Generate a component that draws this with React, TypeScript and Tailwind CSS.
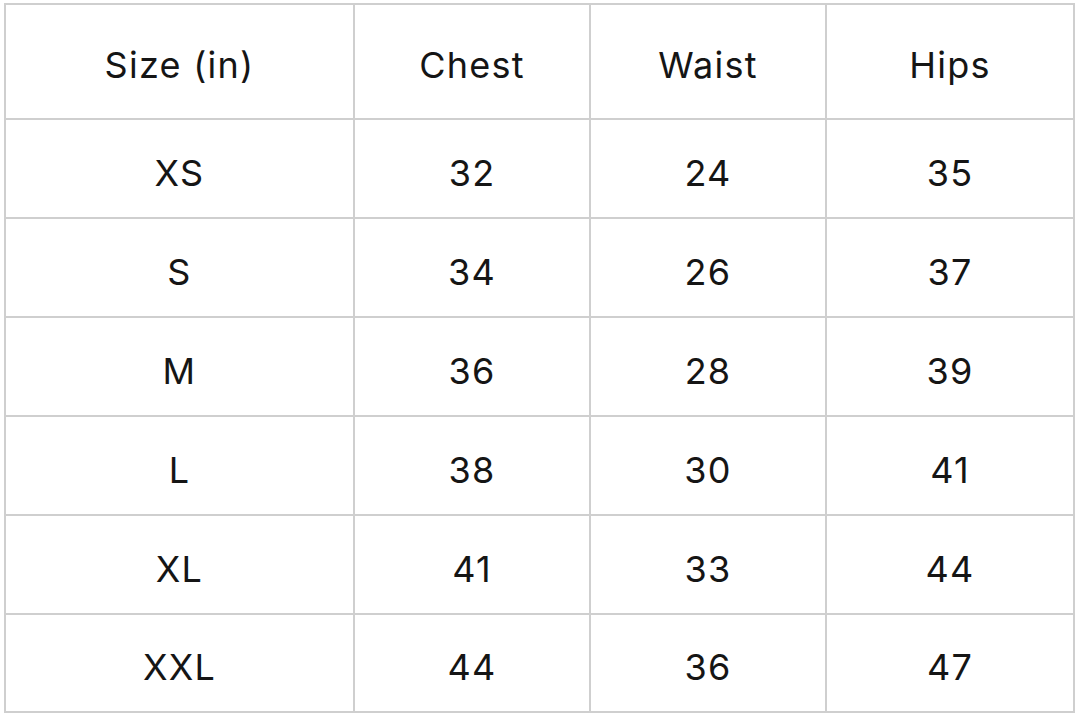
import React from "react";

const header = ["Size (in)", "Chest", "Waist", "Hips"];
const rows = [
  ["XS", "32", "24", "35"],
  ["S", "34", "26", "37"],
  ["M", "36", "28", "39"],
  ["L", "38", "30", "41"],
  ["XL", "41", "33", "44"],
  ["XXL", "44", "36", "47"],
];

export default function App() {
  return (
    <div className="w-[1080px] h-[720px] bg-white pl-[4px] pt-[3px]" style={{ fontFamily: "Inter, 'Liberation Sans', sans-serif" }}>
      <div className="w-[1071px] border-2 border-[#cfcfcf] grid grid-cols-[349px_236px_236px_246px] text-[#151515] text-[36px] tracking-[0.035em]">
        {header.map((h, i) => (
          <div
            key={h}
            className={`h-[115px] flex items-center justify-center pt-[6px] border-b-2 border-[#cfcfcf] ${i < 3 ? "border-r-2" : ""}`}
          >
            {h}
          </div>
        ))}
        {rows.map((r, ri) =>
          r.map((c, ci) => (
            <div
              key={ri + "-" + ci}
              className={`${ri === 5 ? "h-[96px]" : "h-[99px] border-b-2"} flex items-center justify-center pt-[8px] border-[#cfcfcf] ${ci < 3 ? "border-r-2" : ""}`}
            >
              {c}
            </div>
          ))
        )}
      </div>
    </div>
  );
}
